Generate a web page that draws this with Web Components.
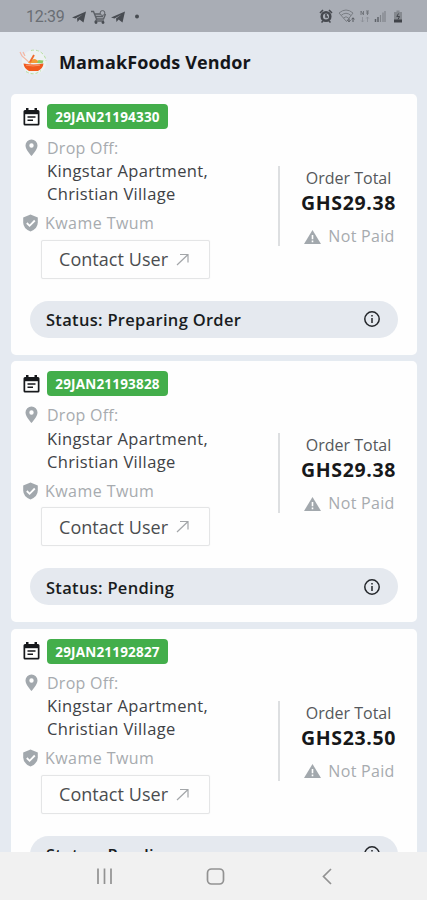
<!DOCTYPE html>
<html lang="en"><head><meta charset="utf-8"><title>MamakFoods Vendor</title>
<style>html,body{margin:0;height:100%;overflow:hidden;font-family:"Open Sans",sans-serif}</style></head>
<body>
<vendor-app></vendor-app>
<script>
const define = (name, html) => customElements.define(name, class extends HTMLElement {
  constructor() {
    super();
    const t = document.createElement('template');
    t.innerHTML = html;
    this.attachShadow({mode: 'open'}).append(t.content.cloneNode(true));
  }
});

define('status-bar', `<style>
:host{display:flex;height:32px;flex:none;box-sizing:border-box;padding:0 22px 0 26px;background:#a9adb5;color:#6a6e74;font:16px/34px Roboto,sans-serif}
.t{width:46px;white-space:nowrap;letter-spacing:-.3px}
.l{flex:none;margin-top:8px}.r{margin:8px 0 0 auto;flex:none}
</style><span class="t">12:39</span>
<svg class="l" width="70" height="18" viewBox="0 0 70 18" fill="#484c52">
<path d="M0 9.500 14 3.500 11.500 14.500 7.500 11.500 5.500 14 5 10.500 10.500 6.500 3.500 10.500Z"/>
<path d="M39 9.500 53 3.500 50.500 14.500 46.500 11.500 44.500 14 44 10.500 49.500 6.500 42.500 10.500Z"/>
<g fill="none" stroke="#5c6066" stroke-width="1.400"><path d="M19 3.500h2.500l3 7.500h7l2-5M22 6h6M23 8.500h8M25 11l-1.500 2h8.500"/><circle cx="30.500" cy="5" r="2.400" stroke-width="1"/></g><circle cx="24" cy="14.500" r="1.400"/><circle cx="31" cy="14.500" r="1.400"/>
<circle cx="65" cy="8.500" r="2"/></svg>
<svg class="r" width="86" height="18" viewBox="0 0 86 18" fill="none" stroke="#46494f">
<circle cx="7" cy="8.500" r="4.300" stroke-width="2.500"/><path d="M7 6V9h2M1 5l3-3M10 2l3 3M2.500 14.500l1.500-1.500M11.500 14.500 10 13" stroke-width="1.600"/>
<g stroke="#7a7e84"><path d="M20 5Q27-1 34 5M22 7.500q5-4.500 10 0M24.500 10q2.500-2.500 5 0"/><path d="M20 5l7.500 8.500L34 5"/><path d="M30 10.500v3m-1.500-1.200 1.500 1.500 1.500-1.500M34 14v-4m-1.500 1.200L34 9.800l1.500 1.400" stroke="#55585e"/></g>
<path d="M42 7V3M44.500 7V3M42 3l2.500 4M47 3h3M47 5h3M48.500 3v4" stroke="#72767c"/><path d="M43.500 9v5M42.200 12.500l1.300 1.500 1.300-1.500M48.500 14V9M47.200 10.500 48.500 9l1.300 1.500" stroke="#8c9097" stroke-width=".9"/>
<path d="M56.500 14v-3M59 14V9" stroke="#5f6369" stroke-width="1.500"/><path d="M61.500 14V7M64 14V4.500M66 14V3" stroke="#80848a" stroke-width="1.200"/>
<path d="M77.500 2.500h3v1.500h2.500v10h-8V4h2.500z" fill="#85898f" stroke="none"/><path d="M75 11.500h8v3h-8z" fill="#404349" stroke="none"/><path d="M79.500 5.500 77.800 8.500h2.700L79 11.500" stroke="#44474d"/>
</svg>`);

define('app-header', `<style>
:host{display:flex;height:61.750px;flex:none;align-items:center;box-sizing:border-box;padding:0 0 2px 19px;color:#15171b}
h1{margin:0 0 0 12px;font:700 18px/26px "Open Sans",sans-serif;letter-spacing:.13px;white-space:nowrap}
</style><svg width="28" height="28" viewBox="0 0 28 28"><circle cx="15" cy="14" r="12.300" fill="#edf2f3"/><path d="M12 2.500A12 12 0 0 1 27 13M7 23.500q8 5 15-1" fill="none" stroke="#b5dfa0" stroke-dasharray="3 2"/><path d="M1 4l2 4 9 8M4 4l2 4" fill="none" stroke="#f4b7a2" stroke-width="1.200"/><path d="M9 15q3-4 7-4l7 4z" fill="#f49b35"/><path d="M11 14l4-7" stroke="#ef6a2c" stroke-width="1.800"/><path d="M18 15l1.500-3 5 .5-1 3z" fill="#8ec862"/><path d="M4.500 15.500q10 2 20 0-.5 5-5.500 7.500h-9q-5-2.500-5.500-7.500z" fill="#f15a1e"/><path d="M7 17.200q7 1.500 14 0" stroke="#ffa072" fill="none" stroke-width=".8"/></svg><h1><slot></slot></h1>`);

define('order-badge', `<style>
:host{display:block;width:121px;height:25px;box-sizing:border-box;border-radius:4px;background:#43ae4b;color:#fff;font:700 13.500px/26px "Open Sans",sans-serif;letter-spacing:.2px;text-align:center;white-space:nowrap}
</style><slot></slot>`);

define('contact-button', `<style>
:host{display:flex;width:169px;height:39px;box-sizing:border-box;border:1px solid #e4e5e6;border-radius:2px;box-shadow:0 0 1px #e4e5e6;align-items:center;padding-left:17px;color:#4b4d50;font-size:18px;letter-spacing:.05px;white-space:nowrap}
svg{margin-left:7px}
</style><slot></slot><svg width="15" height="15" viewBox="0 0 15 15" fill="none" stroke="#a3a6a9" stroke-width="1.200"><path d="M2 13 13 2.500M5 2.500h8v8"/></svg>`);

define('status-pill', `<style>
:host{display:flex;height:36.800px;box-sizing:border-box;border-radius:19px;background:#e5e9ef;align-items:center;justify-content:space-between;padding:2px 17px 0 16.500px;font:600 16.500px/24px "Open Sans",sans-serif;letter-spacing:.3px;color:#191c21;white-space:nowrap}
svg{margin-top:-2px}
</style><span><slot></slot></span><svg width="18" height="18" viewBox="0 0 18 18" fill="none" stroke="#24272b" stroke-width="1.500"><circle cx="9" cy="9" r="7.200"/><path d="M9 8v5M9 5v1.600"/></svg>`);

define('order-total', `<style>
:host{display:flex;flex-direction:column;width:139px;height:80px;box-sizing:border-box;border-left:2px solid #dddfe1;align-items:center;white-space:nowrap}
.a{font-size:16px;line-height:24px;color:#55585b}
.b{font-size:19.500px;font-weight:700;line-height:26px;letter-spacing:.65px;color:#17181a}
.c{display:flex;align-items:center;gap:7px;margin:9px 0 0 2px;font-size:16px;letter-spacing:.3px;line-height:23px;color:#a7abaf}
</style><span class="a">Order Total</span><span class="b"><slot></slot></span>
<span class="c"><svg width="17" height="16" viewBox="0 0 17 16"><path d="M8.500 1 17 15H0z" fill="#a2a8ad"/><path d="M8.500 6v4.300M8.500 11.500v1.700" stroke="#fff" stroke-width="1.600"/></svg><span class="n">Not Paid</span></span>`);

define('order-card', `<style>
:host{display:block;height:261px;flex:none;box-sizing:border-box;padding:10.250px 0 0;background:#fefefe;border-radius:5px;box-shadow:0 0 1px #e9edf1}
.main{display:flex;justify-content:space-between;height:197px}
.info{display:flex;flex-direction:column;font-size:16px;white-space:nowrap}
.row{display:flex;align-items:center}
.ic{width:36px;flex:none;display:flex;box-sizing:border-box;padding-left:12px}
.d{height:22px;margin-top:8px;color:#a7abaf;letter-spacing:.25px}
.addr{margin:.3px 0 0 36px;line-height:23px;font-size:16.500px;letter-spacing:.35px;color:#404246}
.k{height:23px;margin-top:6.700px;color:#a7abaf;letter-spacing:.45px}.k .ic{width:34px;padding-left:11px}
contact-button{margin:5px 0 0 30px}
order-total{margin-top:62px}
status-pill{margin:0 19px 0 18.500px}
</style>
<div class="main"><div class="info">
<div class="row"><span class="ic"><svg width="17" height="18" viewBox="0 0 17 18"><path d="M3 0h2.500v2h6V0H14v2h1q1.500 0 1.500 1.500v12.500q0 1.500-1.500 1.500H2Q.5 17.500.5 16V3.500Q.5 2 2 2h1z" fill="#17191c"/><path d="M2.200 6.200h12.600v9.600H2.200z" fill="#fff"/><path d="M4.500 9h8M4.500 12.300h5.500" stroke="#17191c" stroke-width="1.500"/></svg></span><order-badge><slot name="id"></slot></order-badge></div>
<div class="row d"><span class="ic"><svg width="17" height="18" viewBox="0 0 17 18"><path fill-rule="evenodd" d="M8.500.5a6 6 0 0 1 6 6c0 4.300-6 10.500-6 10.500S2.500 10.800 2.500 6.500a6 6 0 0 1 6-6zm0 3.800a2.200 2.200 0 1 0 0 4.400 2.200 2.200 0 0 0 0-4.400z" fill="#a2a8ad"/></svg></span><span class="x">Drop Off:</span></div>
<div class="addr"><slot></slot></div>
<div class="row k"><span class="ic"><svg width="18" height="18" viewBox="0 0 18 18"><path d="M8.500.5 15.800 3.500v5q0 6-7.300 9-7.300-3-7.300-9v-5z" fill="#a2a8ad"/><path d="M4.800 9l2.800 2.800L12.800 6.500" fill="none" stroke="#fff" stroke-width="1.800"/></svg></span><span class="y"><slot name="user"></slot></span></div>
<contact-button>Contact User</contact-button>
</div><order-total><slot name="total"></slot></order-total></div>
<status-pill><slot name="status"></slot></status-pill>`);

define('nav-bar', `<style>
:host{display:flex;height:48.500px;flex:none;background:#f1f1f1;align-items:center}
svg{display:block}
</style><svg width="427" height="48" viewBox="0 0 427 48" fill="none" stroke="#929292" stroke-width="1.700"><path d="M98 16.500v15.500M104.500 16.500v15.500M111 16.500v15.500"/><rect x="207.500" y="17" width="16" height="15" rx="4"/><path d="M331 17l-7.500 7.500 7.500 7.500"/></svg>`);

define('vendor-app', `<style>
:host{display:flex;flex-direction:column;width:427px;height:900px;background:#e5eaf1}
main{flex:1;min-height:0;overflow:hidden;display:flex;flex-direction:column;gap:6.400px;padding:0 10px 0 11px}
</style><status-bar></status-bar><app-header>MamakFoods Vendor</app-header><main>
${[['29JAN21194330','29.38','Preparing Order'],['29JAN21193828','29.38','Pending'],['29JAN21192827','23.50','Pending']].map(([i,t,s])=>`<order-card><span slot="id">${i}</span>Kingstar Apartment,<br>Christian Village<span slot="user">Kwame Twum</span><span slot="total">GHS${t}</span><span slot="status">Status: ${s}</span></order-card>`).join('')}
</main><nav-bar></nav-bar>`);
</script></body></html>
